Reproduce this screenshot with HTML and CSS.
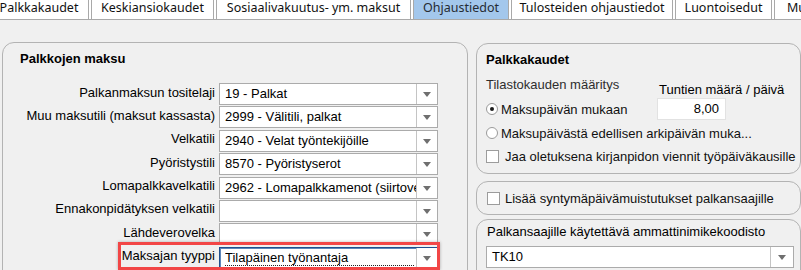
FILE: index.html
```html
<!DOCTYPE html>
<html lang="fi">
<head>
<meta charset="utf-8">
<title>Ohjaustiedot</title>
<link rel="stylesheet" href="styles.css">
</head>
<body>
<nav class="tabs">
  <div class="tab t1">Palkkakaudet</div>
  <div class="tab t2">Keskiansiokaudet</div>
  <div class="tab t3">Sosiaalivakuutus- ym. maksut</div>
  <div class="tab t4 active">Ohjaustiedot</div>
  <div class="tab t5">Tulosteiden ohjaustiedot</div>
  <div class="tab t6">Luontoisedut</div>
  <div class="tab t7">Muut</div>
</nav>
<main class="main">
  <section class="panel left">
    <h2 class="ptitle">Palkkojen maksu</h2>
    <div class="row"><label>Palkanmaksun tositelaji</label><div class="combo"><span class="val">19 - Palkat</span><span class="btn"><i class="arrow"></i></span></div></div>
    <div class="row"><label>Muu maksutili (maksut kassasta)</label><div class="combo"><span class="val">2999 - Välitili, palkat</span><span class="btn"><i class="arrow"></i></span></div></div>
    <div class="row"><label>Velkatili</label><div class="combo"><span class="val">2940 - Velat työntekijöille</span><span class="btn"><i class="arrow"></i></span></div></div>
    <div class="row"><label>Pyöristystili</label><div class="combo"><span class="val">8570 - Pyöristyserot</span><span class="btn"><i class="arrow"></i></span></div></div>
    <div class="row"><label>Lomapalkkavelkatili</label><div class="combo"><span class="val">2962 - Lomapalkkamenot (siirtovelat)</span><span class="btn"><i class="arrow"></i></span></div></div>
    <div class="row"><label>Ennakonpidätyksen velkatili</label><div class="combo"><span class="val"></span><span class="btn"><i class="arrow"></i></span></div></div>
    <div class="row"><label>Lähdeverovelka</label><div class="combo"><span class="val"></span><span class="btn"><i class="arrow"></i></span></div></div>
    <div class="row hl"><label>Maksajan tyyppi</label><div class="combo focus"><span class="val">Tilapäinen työnantaja</span><span class="btn"><i class="arrow"></i></span></div><div class="mark"></div></div>
  </section>
  <div class="rightcol">
    <section class="panel p1">
      <h2 class="ptitle">Palkkakaudet</h2>
      <div class="prow r-head"><span class="stat">Tilastokauden määritys</span><span class="hours">Tuntien määrä / päivä</span></div>
      <div class="prow r-radio1"><span class="opt"><span class="radio on"></span>Maksupäivän mukaan</span><span class="numbox">8,00</span></div>
      <div class="prow r-radio2"><span class="opt"><span class="radio"></span>Maksupäivästä edellisen arkipäivän muka...</span></div>
      <div class="prow r-check"><span class="opt"><span class="check"></span>Jaa oletuksena kirjanpidon viennit työpäiväkausille</span></div>
    </section>
    <section class="panel p2">
      <span class="opt"><span class="check"></span>Lisää syntymäpäivämuistutukset palkansaajille</span>
    </section>
    <section class="panel p3">
      <div class="p3label">Palkansaajille käytettävä ammattinimikekoodisto</div>
      <div class="combo wide"><span class="val">TK10</span><span class="btn"><i class="arrow"></i></span></div>
    </section>
  </div>
</main>
</body>
</html>
```
FILE: styles.css
```css
* { box-sizing: border-box; margin: 0; padding: 0; }
html, body { width: 801px; height: 270px; overflow: hidden; }
body {
  background: #f0f0f0;
  font-family: "Liberation Sans", Arial, sans-serif;
  font-size: 13px;
  line-height: 15px;
  color: #000;
}

/* tabs */
.tabs {
  display: flex;
  gap: 2px;
  width: 940px;
  height: 20px;
  margin-left: -11px;
  background: #fff;
  border-bottom: 1px solid #a9a9a9;
}
.tab {
  flex: none;
  height: 19px;
  border-left: 1px solid #a9a9a9;
  border-right: 1px solid #a9a9a9;
  background: #fff;
  font-family: "Noto Sans", "Open Sans", sans-serif;
  font-size: 12.5px;
  line-height: 15px;
  color: #111;
  text-align: center;
  white-space: nowrap;
  overflow: hidden;
}
.tab.active { background: #a3c7ec; color: #262b33; }
.t1 { width: 100px; }
.t2 { width: 123px; }
.t3 { width: 195px; }
.t4 { width: 96px; }
.t5 { width: 162px; }
.t6 { width: 97px; }
.t7 { width: 120px; text-align: left; padding-left: 12px; }

/* layout */
.main {
  display: flex;
  align-items: flex-start;
  gap: 8px;
  padding: 22px 0 0 2px;
}
.panel {
  border: 1px solid #b3b3b3;
  border-radius: 12px;
  background: #f0f0f0;
}
.ptitle {
  font-size: 13px;
  font-weight: bold;
  line-height: 15px;
  color: #000;
}

/* left panel */
.left {
  width: 466px;
  height: 300px;
  padding-top: 8px;
}
.left .ptitle { padding-left: 17px; margin-bottom: 17px; }
.row {
  display: flex;
  align-items: center;
  height: 22px;
  margin-bottom: 1.4px;
}
.row label {
  width: 212px;
  margin-right: 4px;
  padding-bottom: 4px;
  text-align: right;
  white-space: nowrap;
  color: #000;
}
.row.hl { position: relative; }
.mark {
  position: absolute;
  left: 115px;
  top: -5px;
  width: 322px;
  height: 28px;
  border: 3px solid #f24646;
  box-shadow: 0 0 3px rgba(0, 0, 0, 0.28);
  pointer-events: none;
}

/* combobox */
.combo {
  display: flex;
  width: 219px;
  height: 22px;
  border: 1px solid #ababab;
  background: #fff;
}
.combo .val {
  flex: 1;
  min-width: 0;
  padding-left: 5px;
  line-height: 20px;
  white-space: nowrap;
  overflow: hidden;
  color: #000;
}
.combo .btn {
  flex: none;
  width: 21px;
  border-left: 1px solid #c4c4c4;
  display: flex;
  align-items: center;
  justify-content: center;
  background: #fff;
}
.arrow {
  display: block;
  width: 0;
  height: 0;
  border-left: 4px solid transparent;
  border-right: 4px solid transparent;
  border-top: 5px solid #6f6f6f;
  margin-top: 1px;
}
.combo.focus {
  border-color: #1f4f8e;
  box-shadow: inset 1px 0 0 #5d86ba, inset 0 1px 0 #5d86ba;
}
.combo.focus .val {
  flex: none;
  width: 189px;
  margin: 2px 0 2px 5px;
  padding-left: 0;
  line-height: 15px;
  border-bottom: 1px dotted #222;
}
.combo.focus .btn { margin-left: auto; }

/* right column */
.rightcol {
  width: 325px;
  margin-top: 1px;
}
.p1 {
  height: 131px;
  padding: 8px 0 0 9px;
}
.p1 .ptitle { margin-bottom: 10px; }
.prow { display: flex; }
.r-head { height: 21px; }
.stat { width: 171px; color: #2e2e2e; }
.hours { padding-left: 2px; margin-top: 5px; color: #000; white-space: nowrap; }
.r-radio1 { height: 22px; align-items: center; }
.r-radio1 .opt { width: 171px; }
.r-radio2 { height: 22px; margin-top: 2px; align-items: center; }
.r-check { height: 23px; margin-top: 1px; align-items: center; }
.opt {
  display: flex;
  align-items: center;
  white-space: nowrap;
  color: #111;
}
.radio {
  flex: none;
  width: 12px;
  height: 12px;
  margin-right: 3px;
  border: 1px solid #9a9a9a;
  border-radius: 50%;
  background: #fff;
  display: flex;
  align-items: center;
  justify-content: center;
}
.radio.on::after {
  content: "";
  width: 4px;
  height: 4px;
  border-radius: 50%;
  background: #1a1a1a;
}
.check {
  flex: none;
  width: 13px;
  height: 13px;
  margin-right: 6px;
  border: 1px solid #9c9c9c;
  background: #fff;
}
.numbox {
  width: 69px;
  height: 22px;
  border: 1px solid #e2e2e2;
  background: #fff;
  text-align: right;
  padding-right: 6px;
  line-height: 20px;
  color: #000;
}
.p2 {
  height: 34px;
  margin-top: 7px;
  padding-left: 10px;
  display: flex;
  align-items: center;
}
.p2 .check { margin-right: 5px; }
.p3 {
  height: 100px;
  margin-top: 4px;
  padding: 4px 0 0 10px;
}
.p3label { color: #000; margin-bottom: 7px; white-space: nowrap; }
.combo.wide { width: 308px; margin-left: -1px; }
.combo.wide .btn { width: 23px; }
```
